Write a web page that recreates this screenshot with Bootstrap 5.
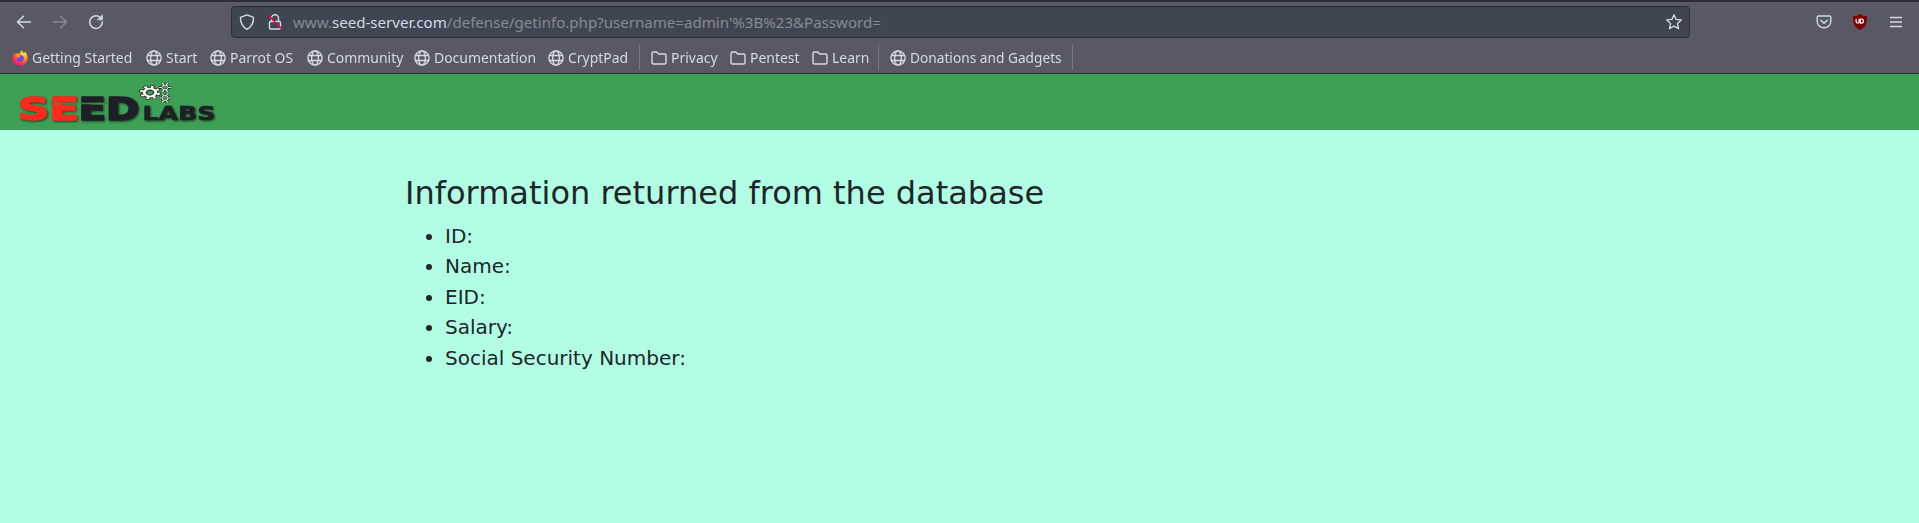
<!DOCTYPE html>
<html lang="en">
<head>
<meta charset="utf-8">
<title>SEED Labs</title>
<link href="https://cdn.jsdelivr.net/npm/bootstrap@5.3.0/dist/css/bootstrap.min.css" rel="stylesheet">
<style>
body{background:#b2fee4;font-family:"DejaVu Sans",sans-serif;color:#212529;min-height:523px;overflow:hidden}
svg{display:block;flex:none}
.chrome{background:#585965;height:74px;border-top:2px solid #2b2d38;border-bottom:1px solid #2b2d38;font-family:"Noto Sans",sans-serif;color:#d3dae3}
.toolrow{height:40px;padding:0 10px 0 15px}
.navbtns{width:216px;gap:18px;flex:none}
.urlbar{width:1459px;flex:none;height:32px;background:#404552;border:1px solid #2b2e39;border-radius:4px;padding:0 6px 0 7px;font-size:15.08px;color:#868a94;white-space:pre}
.urlbar b{font-weight:400;color:#d3dae3}
.lockicon{margin:0 10px 0 12px}
.tools{gap:18px;margin-left:125px}
.marks{height:31px;padding-left:12px;font-size:15px;white-space:nowrap}
.mk{display:flex;align-items:center;gap:4px;margin-right:12px}
.mk span{display:block;height:23px;line-height:22px;transform:scaleX(.93);transform-origin:0 50%}
.mk .tight{transform:scaleX(.913)}
.divider{width:1px;height:25px;background:#767884;margin-right:11px;margin-left:-1px}
.sitebar{background:#3ea055;height:56px;padding-left:18px}
.main-col{width:1140px;margin:0 auto;padding:44px 14.500px 0 15.500px}
h1{font-size:32px;line-height:38.4px;margin:0 0 8.600px;font-weight:400}
.info{font-size:20px;line-height:30.4px;padding-left:40px;margin:0}
</style>
</head>
<body>
<svg width="0" height="0" class="position-absolute"><defs>
<symbol id="globe" viewBox="0 0 16 16"><g fill="none" stroke="#d3dae3" stroke-width="1.4"><circle cx="8" cy="8" r="7.1"/><ellipse cx="8" cy="8" rx="3.4" ry="7.1"/><path d="M1.500 5.500h13M1.500 10.500h13"/></g></symbol>
<symbol id="folder" viewBox="0 0 16 16"><path d="M1 12.500V3.500Q1 2 2.500 2h3.200l2 2h5.800Q15 4 15 5.500v7q0 1.500-1.500 1.500h-11Q1 14 1 12.500z" fill="none" stroke="#d3dae3" stroke-width="1.4"/></symbol>
<symbol id="gear" viewBox="-10 -10 20 20" preserveAspectRatio="none"><circle r="7.600" fill="none" stroke="#222" stroke-width="4.600" stroke-dasharray="3.600 2.370"/><circle r="5.200" fill="none" stroke="#222" stroke-width="4.800"/><circle r="7.600" fill="none" stroke="#fff" stroke-width="3" stroke-dasharray="2.400 3.570" stroke-dashoffset="-.6"/><circle r="5.200" fill="none" stroke="#fff" stroke-width="2.600"/></symbol>
<symbol id="minigear" viewBox="-6.500 -5 13 10"><path d="M-2.500-4.500 2.500 4.500M2.500-4.500-2.500 4.500M-6 0H6" stroke="#222" stroke-width="2.600"/><ellipse rx="3.200" ry="2.500" fill="#3ea055" stroke="#222" stroke-width="2.200"/><path d="M-2.500-4.500-1.500-2.500M2.500-4.500 1.500-2.500M-2.500 4.500-1.500 2.500M2.500 4.500 1.500 2.500M-5.700 0H-3.500M3.500 0H5.700" stroke="#fff" stroke-width="1.200"/><ellipse rx="3.100" ry="2.400" fill="none" stroke="#fff" stroke-width="1"/></symbol>
<radialGradient id="fire" cx=".75" cy=".15" r=".95"><stop offset="0" stop-color="#fff44f"/><stop offset=".4" stop-color="#ff980e"/><stop offset=".75" stop-color="#ff3647"/><stop offset="1" stop-color="#e31587"/></radialGradient>
</defs></svg>
<header class="chrome">
 <div class="toolrow d-flex align-items-center">
  <div class="navbtns d-flex align-items-center">
   <svg width="18" height="18" viewBox="0 0 18 18" fill="none" stroke="#d3dae3" stroke-width="1.5" stroke-linecap="round" stroke-linejoin="round"><path d="M15.500 9H2.500M8.500 3.200 2.500 9l6 5.800"/></svg>
   <svg width="18" height="18" viewBox="0 0 18 18" fill="none" stroke="#888a95" stroke-width="1.5" stroke-linecap="round" stroke-linejoin="round"><path d="M2.500 9h13M9.500 3.200l6 5.800-6 5.800"/></svg>
   <svg width="18" height="18" viewBox="0 0 18 18" fill="none" stroke="#d3dae3" stroke-width="1.500" stroke-linecap="round"><path d="M13 4.300A6.300 6.300 0 1 0 15.300 9"/><path d="M15.500 2.200v4.600h-4.800z" fill="#d3dae3" stroke-width=".7" stroke-linejoin="round"/></svg>
  </div>
  <div class="urlbar d-flex align-items-center">
   <svg width="16" height="16" viewBox="0 0 16 16"><path d="M8 .9 14.500 3.400C14.600 8.500 12.500 13 8 15.300 3.500 13 1.400 8.500 1.500 3.400z" fill="none" stroke="#d3dae3" stroke-width="1.400" stroke-linejoin="round"/></svg>
   <svg class="lockicon" width="16" height="16" viewBox="0 0 16 16"><g fill="none" stroke="#d3dae3" stroke-width="1.400"><path d="M4.500 7V4.300a3.500 3.500 0 0 1 7 0V7"/><rect x="2.500" y="7.500" width="11" height="7.500" rx="1"/></g><path d="M1.500 1.500 15 15" stroke="#e2093f" stroke-width="1.600"/></svg>
   <span>www.<b>seed-server.com</b>/defense/getinfo.php?username=admin'%3B%23&amp;Password=</span>
   <svg class="ms-auto" width="18" height="18" viewBox="0 0 18 18"><path d="m9 1.700 2.100 4.700 5.200.5-3.900 3.500 1.200 5.200L9 13.200l-4.600 2.400 1.200-5.200L1.700 6.900l5.200-.5z" fill="none" stroke="#d3dae3" stroke-width="1.300" stroke-linejoin="round"/></svg>
  </div>
  <div class="tools d-flex align-items-center">
   <svg width="18" height="18" viewBox="0 0 18 18" fill="none" stroke="#d3dae3" stroke-width="1.400" stroke-linecap="round" stroke-linejoin="round"><path d="M3.500 3h11q1.300 0 1.300 1.300v4.200a6.800 6.300 0 0 1-13.600 0V4.300Q2.200 3 3.500 3zM5.700 7.300 9 10.300l3.300-3"/></svg>
   <svg width="18" height="18" viewBox="0 0 18 18"><path d="M9 1Q12 3.500 16 3.200C16.200 10 15 14 9 17 3 14 1.800 10 2 3.200Q6 3.500 9 1z" fill="#800000"/><path d="M5.100 6v2.600q0 1.500 1.500 1.500t1.500-1.500V6M9.300 6v4.100h1.200q2-.1 2-2.050T10.500 6z" fill="none" stroke="#fff" stroke-width="1.200"/></svg>
   <svg width="18" height="18" viewBox="0 0 18 18" stroke="#d3dae3" stroke-width="1.300"><path d="M3 4.500h12M3 9h12M3 13.500h12"/></svg>
  </div>
 </div>
 <div class="marks d-flex align-items-center">
  <div class="mk"><svg width="16" height="16" viewBox="0 0 16 16"><path d="M9.500.3Q11 1.400 11.500 3q2-.2 1.600-1.500Q15.700 4.500 15.700 8.400A7.700 7.400 0 0 1 .3 8.500Q.3 5 2.500 2.700L3 4.200Q4 3.200 5.200 3.200 6.500 3.500 8 3.400 8.300 1.500 9.500.3z" fill="url(#fire)"/><circle cx="8.200" cy="8.600" r="3.500" fill="#7542e5"/><path d="M3.800 5.300Q6 4 8.500 5.700 8.700 7 6.500 7.400 5.500 9 7 10.200" fill="#ff9a1c"/></svg><span style="width:101.5px">Getting Started</span></div>
  <div class="mk"><svg width="16" height="16"><use href="#globe"/></svg><span style="width:32px">Start</span></div>
  <div class="mk"><svg width="16" height="16"><use href="#globe"/></svg><span style="width:65px">Parrot OS</span></div>
  <div class="mk"><svg width="16" height="16"><use href="#globe"/></svg><span style="width:75.5px">Community</span></div>
  <div class="mk"><svg width="16" height="16"><use href="#globe"/></svg><span style="width:102px">Documentation</span></div>
  <div class="mk"><svg width="16" height="16"><use href="#globe"/></svg><span style="width:59.5px">CryptPad</span></div>
  <i class="divider"></i>
  <div class="mk"><svg width="16" height="16"><use href="#folder"/></svg><span style="width:47px">Privacy</span></div>
  <div class="mk"><svg width="16" height="16"><use href="#folder"/></svg><span style="width:50px">Pentest</span></div>
  <div class="mk"><svg width="16" height="16"><use href="#folder"/></svg><span style="width:35px">Learn</span></div>
  <i class="divider"></i>
  <div class="mk"><svg width="16" height="16"><use href="#globe"/></svg><span class="tight" style="width:151.5px">Donations and Gadgets</span></div>
  <i class="divider"></i>
 </div>
</header>
<nav class="sitebar">
 <svg width="204" height="54" viewBox="18 74 204 54" font-family="DejaVu Sans" font-weight="700">
  <g style="filter:drop-shadow(1px 1px 1px rgba(0,0,0,.6))">
   <g font-size="31.500" stroke-width="1.600" stroke-linejoin="round">
    <text x="18" y="119.500" textLength="61" lengthAdjust="spacingAndGlyphs" fill="#fe2a1b" stroke="#fe2a1b">SE</text>
    <text x="78.500" y="119.500" textLength="61" lengthAdjust="spacingAndGlyphs" fill="#1f2027" stroke="#1f2027">ED</text>
   </g>
   <g fill="#1f2027" stroke="#1f2027" stroke-width=".6"><text x="142.500" y="119.500" font-size="20" textLength="73" lengthAdjust="spacingAndGlyphs">LABS</text></g>
  </g>
  <path d="M50 103.500h28M80 103.500h28" stroke="#37884b" stroke-width="1.500"/>
  <use href="#gear" x="139" y="85" width="22" height="15"/>
  <use href="#minigear" x="158.500" y="82.500" width="13" height="10"/>
  <use href="#minigear" x="158.500" y="93" width="13" height="10"/>
 </svg>
</nav>
<main class="main-col">
 <h1>Information returned from the database</h1>
 <ul class="info"><li>ID: </li><li>Name: </li><li>EID: </li><li>Salary: </li><li>Social Security Number: </li></ul>
</main>
<script src="https://cdn.jsdelivr.net/npm/bootstrap@5.3.0/dist/js/bootstrap.bundle.min.js"></script>
</body>
</html>
